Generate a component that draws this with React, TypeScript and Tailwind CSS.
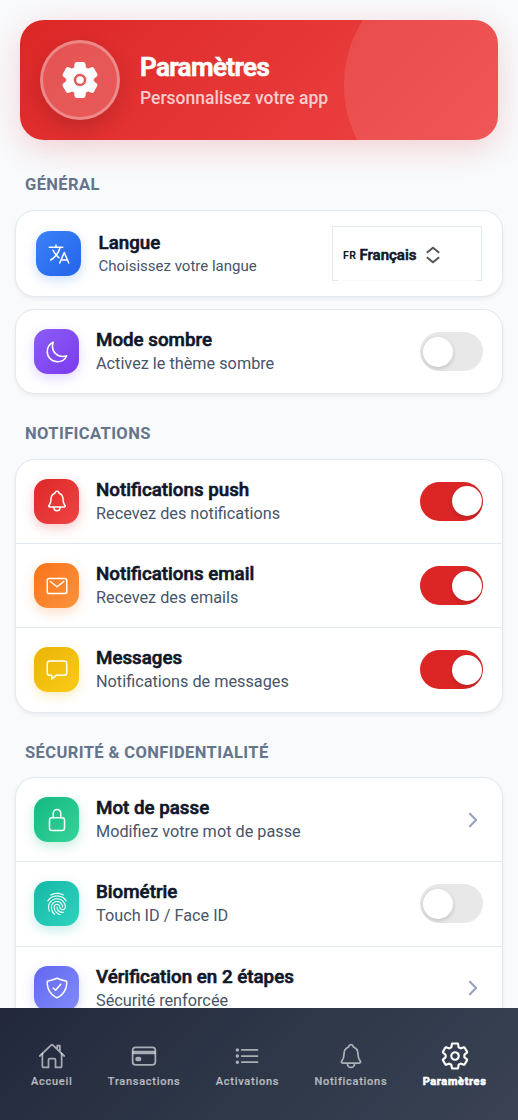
import type { ReactNode } from "react";
import type { IconType } from "react-icons";
import {
  IoCardOutline,
  IoChatboxOutline,
  IoChevronForward,
  IoFingerPrintOutline,
  IoHomeOutline,
  IoLanguageOutline,
  IoListOutline,
  IoLockClosedOutline,
  IoMailOutline,
  IoMoonOutline,
  IoNotificationsOutline,
  IoSettings,
  IoSettingsOutline,
  IoShieldCheckmarkOutline,
} from "react-icons/io5";

type Row = {
  icon: IconType;
  tile: string;
  title: string;
  subtitle: string;
  control: "on" | "off" | "link";
};

const NOTIFICATIONS: Row[] = [
  {
    icon: IoNotificationsOutline,
    tile: "from-[#dc2626] to-[#ef4444] shadow-[0_4px_12px_rgba(220,38,38,0.25)]",
    title: "Notifications push",
    subtitle: "Recevez des notifications",
    control: "on",
  },
  {
    icon: IoMailOutline,
    tile: "from-[#f97316] to-[#fb923c] shadow-[0_4px_12px_rgba(249,115,22,0.25)]",
    title: "Notifications email",
    subtitle: "Recevez des emails",
    control: "on",
  },
  {
    icon: IoChatboxOutline,
    tile: "from-[#eab308] to-[#facc15] shadow-[0_4px_12px_rgba(234,179,8,0.25)]",
    title: "Messages",
    subtitle: "Notifications de messages",
    control: "on",
  },
];

const SECURITY: Row[] = [
  {
    icon: IoLockClosedOutline,
    tile: "from-[#10b981] to-[#34d399] shadow-[0_4px_12px_rgba(16,185,129,0.25)]",
    title: "Mot de passe",
    subtitle: "Modifiez votre mot de passe",
    control: "link",
  },
  {
    icon: IoFingerPrintOutline,
    tile: "from-[#14b8a6] to-[#2dd4bf] shadow-[0_4px_12px_rgba(20,184,166,0.25)]",
    title: "Biométrie",
    subtitle: "Touch ID / Face ID",
    control: "off",
  },
  {
    icon: IoShieldCheckmarkOutline,
    tile: "from-[#6366f1] to-[#818cf8] shadow-[0_4px_12px_rgba(99,102,241,0.25)]",
    title: "Vérification en 2 étapes",
    subtitle: "Sécurité renforcée",
    control: "link",
  },
];

const TABS = [
  { icon: IoHomeOutline, label: "Accueil", active: false },
  { icon: IoCardOutline, label: "Transactions", active: false },
  { icon: IoListOutline, label: "Activations", active: false },
  { icon: IoNotificationsOutline, label: "Notifications", active: false },
  { icon: IoSettingsOutline, label: "Paramètres", active: true },
];

const Toggle = ({ on }: { on: boolean }) => (
  <button
    role="switch"
    aria-checked={on}
    className={`flex h-[39px] w-[63px] shrink-0 items-center overflow-hidden rounded-full ${
      on ? "justify-end bg-[#dc2626] pr-px" : "bg-[#e8e8e8] pl-[3px]"
    }`}
  >
    <span className="h-[30px] w-[30px] rounded-full bg-white shadow-[0_3px_4px_rgba(0,0,0,0.06),0_1px_5px_rgba(0,0,0,0.12)]" />
  </button>
);

const Tile = ({ icon: Icon, tile }: { icon: IconType; tile: string }) => (
  <div
    className={`flex h-[45px] w-[45px] shrink-0 items-center justify-center rounded-[14px] bg-linear-135 text-white ${tile}`}
  >
    <Icon size={24} />
  </div>
);

const SectionTitle = ({ children }: { children: ReactNode }) => (
  <h2 className="pl-[10px] text-[16.5px] leading-[22px] font-bold tracking-[0.4px] text-[#64748b] uppercase">
    {children}
  </h2>
);

const Card = ({ children }: { children: ReactNode }) => (
  <div className="overflow-hidden rounded-[20px] border border-[#e2e8f0] bg-white shadow-[0_2px_4px_rgba(0,0,0,0.06)]">
    {children}
  </div>
);

const SettingRow = ({ icon, tile, title, subtitle, control }: Row) => (
  <div className="flex h-[84.25px] items-center border-b border-[#e2e8f0] pr-[19px] pl-[18px] last:h-[83.25px] last:border-b-0">
    <Tile icon={icon} tile={tile} />
    <div className="ml-[17px] flex-1 pt-[0.6px]">
      <p className="text-[18.75px] leading-[24px] font-medium text-[#0f172a] [-webkit-text-stroke:0.6px_#0f172a]">
        {title}
      </p>
      <p className="text-[16.25px] leading-[24px] text-[#475569]">{subtitle}</p>
    </div>
    {control === "link" ? (
      <IoChevronForward size={22} className="-mr-px text-[#94a3b8]" />
    ) : (
      <Toggle on={control === "on"} />
    )}
  </div>
);

export default function App() {
  return (
    <div className="flex h-[1120px] w-[518px] flex-col overflow-hidden bg-[#f8fafc] font-[Roboto,sans-serif]">
      <main className="min-h-0 flex-1 overflow-hidden px-[15px] pt-5">
        <header className="relative mx-[5px] flex h-[120px] items-center rounded-3xl bg-linear-135 from-[#dc2626] to-[#ef4444] pl-5 shadow-[0_8px_32px_rgba(220,38,38,0.2)]">
          <div className="absolute inset-0 overflow-hidden rounded-3xl">
            <div className="absolute top-[-55px] left-[324px] h-[240px] w-[239px] rounded-full bg-white/10" />
          </div>
          <div className="flex h-20 w-20 items-center justify-center rounded-full border-3 border-white/30 bg-white/20 text-white shadow-[0_8px_20px_rgba(0,0,0,0.15)]">
            <IoSettings size={40} />
          </div>
          <div className="ml-5">
            <h1 className="text-[26px] leading-[31px] font-semibold tracking-[-0.6px] text-white [-webkit-text-stroke:0.7px_white]">
              Paramètres
            </h1>
            <p className="mt-[5px] text-[17.5px] leading-[20px] font-medium text-white/75">
              Personnalisez votre app
            </p>
          </div>
        </header>

        <div className="mt-[34px]">
          <SectionTitle>Général</SectionTitle>
        </div>
        <div className="mt-[14px]">
          <Card>
            <div className="flex h-[85px] items-center pr-5 pl-5">
              <Tile
                icon={IoLanguageOutline}
                tile="from-[#3b82f6] to-[#2563eb] shadow-[0_4px_12px_rgba(59,130,246,0.25)]"
              />
              <div className="ml-[17.5px] flex-1">
                <p className="text-[18.75px] leading-[24px] font-medium text-[#0f172a] [-webkit-text-stroke:0.6px_#0f172a]">
                  Langue
                </p>
                <p className="text-[15px] leading-[22px] text-[#475569]">
                  Choisissez votre langue
                </p>
              </div>
              <button className="relative flex h-[55px] w-[150px] items-center border border-[#e2e8f0] pt-[3px] pl-[10px] text-[#0f172a]">
                <span className="pt-[2px] text-[10.5px] font-bold tracking-[0.5px]">
                  FR
                </span>
                <span className="ml-[3px] text-[15px] font-medium [-webkit-text-stroke:0.6px_#0f172a]">
                  Français
                </span>
                {/* up/down select handle */}
                <svg
                  viewBox="0 0 18 18"
                  className="ml-[7px] h-[18px] w-[18px]"
                  fill="none"
                  stroke="#555"
                  strokeWidth="2"
                >
                  <path d="M2.8 6.8 9 1.8l6.2 5M2.8 11.2l6.2 5 6.2-5" />
                </svg>
                {/* opens the bottom edge between the corners */}
                <span className="absolute inset-x-[5px] -bottom-px h-px bg-white/80" />
              </button>
            </div>
          </Card>
        </div>
        <div className="mt-3">
          <Card>
            <SettingRow
              icon={IoMoonOutline}
              tile="from-[#8b5cf6] to-[#7c3aed] shadow-[0_4px_12px_rgba(139,92,246,0.25)]"
              title="Mode sombre"
              subtitle="Activez le thème sombre"
              control="off"
            />
          </Card>
        </div>

        <div className="mt-[28.5px]">
          <SectionTitle>Notifications</SectionTitle>
        </div>
        <div className="mt-[14px]">
          <Card>
            {NOTIFICATIONS.map((row) => (
              <SettingRow key={row.title} {...row} />
            ))}
          </Card>
        </div>

        <div className="mt-[29.2px]">
          <SectionTitle>Sécurité & confidentialité</SectionTitle>
        </div>
        <div className="mt-[13.4px]">
          <Card>
            {SECURITY.map((row) => (
              <SettingRow key={row.title} {...row} />
            ))}
          </Card>
        </div>
      </main>

      <nav className="flex h-28 shrink-0 items-center justify-between bg-linear-135 from-[#23283c] via-[#2d3748] to-[#3a4254] pt-px pr-[31.5px] pl-[31px]">
        {TABS.map(({ icon: Icon, label, active }) => (
          <div
            key={label}
            className={`flex flex-col items-center ${
              active ? "text-white" : "text-white/60"
            }`}
          >
            <div className="flex h-[30px] items-center">
              <Icon
                size={active ? 30 : 28}
                className={active ? "[&_path]:[stroke-width:36px]" : ""}
              />
            </div>
            <span
              className={`mt-[4px] text-[11px] leading-[14px] ${
                active
                  ? "font-bold tracking-[0.65px] [-webkit-text-stroke:0.6px_white]"
                  : "font-medium tracking-[0.73px] [-webkit-text-stroke:0.2px_currentColor]"
              }`}
            >
              {label}
            </span>
          </div>
        ))}
      </nav>
    </div>
  );
}
